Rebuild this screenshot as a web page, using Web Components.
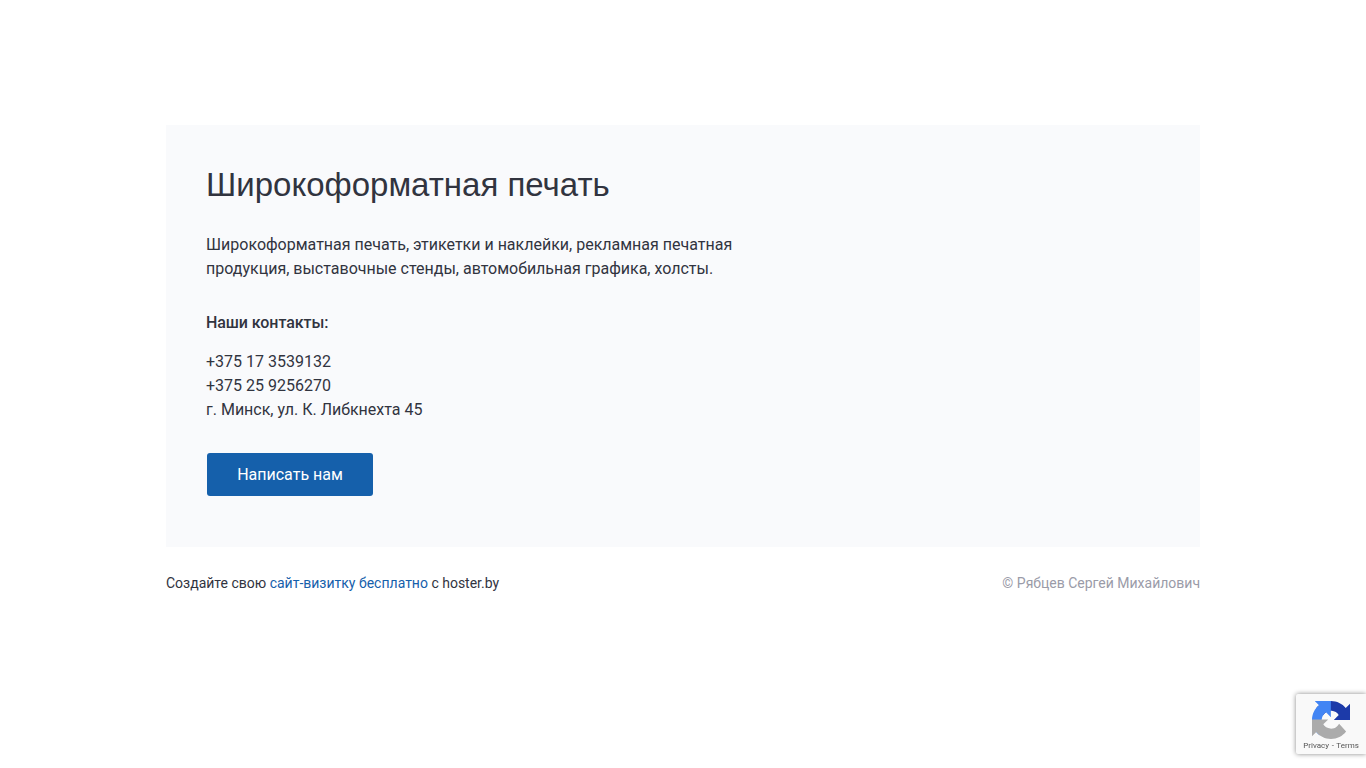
<!DOCTYPE html>
<html lang="ru"><head><meta charset="utf-8"><title>Широкоформатная печать</title>
<style>html,body{margin:0;background:#fff}body{font-family:Roboto,sans-serif;color:#31343f}</style></head>
<body>
<site-page>
  <info-card>
    <span slot="title">Широкоформатная печать</span>
    <span slot="desc">Широкоформатная печать, этикетки и наклейки, рекламная печатная продукция, выставочные стенды, автомобильная графика, холсты.</span>
    <span slot="label">Наши контакты:</span>
    <span slot="contacts">+375 17 3539132<br>+375 25 9256270<br>г. Минск, ул. К. Либкнехта 45</span>
    <span slot="action">Написать нам</span>
  </info-card>
  <site-footer>
    <span slot="left">Создайте свою <a href="#" style="color:#1560ab;text-decoration:none">сайт-визитку бесплатно</a> с hoster.by</span>
    <span slot="right">© Рябцев Сергей Михайлович</span>
  </site-footer>
</site-page>
<recaptcha-badge></recaptcha-badge>
<script>
const def=(n,html)=>customElements.define(n,class extends HTMLElement{constructor(){super();this.attachShadow({mode:'open'}).innerHTML=html}});
def('site-page',`<style>:host{display:block;width:1034px;margin:0 auto;padding:125px 0 0}</style><slot></slot>`);
def('info-card',`<style>
:host{display:block;background:#f9fafc;padding:40px;height:422px;box-sizing:border-box}
h1{margin:0;font:400 33px/40px "Liberation Sans",Arial,sans-serif;color:#31343f}
.d{margin:28px 0 0;width:560px;font:400 16px/24px Roboto,sans-serif}
.l{margin:30px 0 0;font:500 16px/24px Roboto,sans-serif;letter-spacing:-.07px}
.c{margin:15px 0 0;font:400 16px/24px Roboto,sans-serif}
.b{display:flex;align-items:center;justify-content:center;box-sizing:border-box;width:166px;height:43px;margin:31px 0 0 1px;background:#1560ab;color:#fff;border-radius:3px;font:400 16px/24px Roboto,sans-serif}
</style>
<h1><slot name="title"></slot></h1>
<div class="d"><slot name="desc"></slot></div>
<div class="l"><slot name="label"></slot></div>
<div class="c"><slot name="contacts"></slot></div>
<div class="b"><slot name="action"></slot></div>`);
def('site-footer',`<style>
:host{display:flex;justify-content:space-between;margin-top:26px;font:400 14px/20px Roboto,sans-serif}
.r{color:#9a9ba8}
</style><div><slot name="left"></slot></div><div class="r"><slot name="right"></slot></div>`);
def('recaptcha-badge',`<style>
:host{display:flex;flex-direction:column;align-items:center;position:fixed;right:0;bottom:14px;width:70px;height:60px;box-sizing:border-box;background:#f9f9f9;box-shadow:0 0 5px #888;border-radius:2px 0 0 2px;overflow:hidden;padding-top:7px}
svg{display:block;width:38px;height:38px}
.t{font:400 8px/10px Roboto,"Liberation Sans",sans-serif;color:#555;white-space:nowrap;margin-top:2px;word-spacing:.6px}
</style>
<svg viewBox="0 0 64 64" aria-hidden="true">
  <path d="M64 31.955l-.033-1.37V4.687l-7.16 7.16C50.948 4.674 42.033.093 32.05.093c-10.4 0-19.622 4.96-25.458 12.64l11.736 11.86a15.55 15.55 0 0 1 4.754-5.334c2.05-1.6 4.952-2.906 8.968-2.906.485 0 .86.057 1.135.163 4.976.393 9.288 3.14 11.828 7.124l-8.307 8.307c10.522-.04 22.4-.066 27.295.005" fill="#1c3aa9"/>
  <path d="M31.862.094l-1.37.033H4.594l7.16 7.16C4.58 13.147 0 22.06 0 32.046c0 10.4 4.96 19.622 12.64 25.458L24.5 45.768a15.55 15.55 0 0 1-5.334-4.754c-1.6-2.05-2.906-4.952-2.906-8.968 0-.485.057-.86.163-1.135.393-4.976 3.14-9.288 7.124-11.828l8.307 8.307c-.04-10.522-.066-22.4.005-27.295" fill="#4285f4"/>
  <path d="M.001 32.045l.033 1.37v25.898l7.16-7.16c5.86 7.173 14.774 11.754 24.76 11.754 10.4 0 19.622-4.96 25.458-12.64L45.677 38.4a15.55 15.55 0 0 1-4.754 5.334c-2.05 1.6-4.952 2.906-8.968 2.906-.485 0-.86-.057-1.135-.163-4.976-.393-9.288-3.14-11.828-7.124l8.307-8.307c-10.522.04-22.4.066-27.295-.005" fill="#ababab"/>
</svg>
<div class="t">Privacy - Terms</div>`);
</script>
</body></html>
